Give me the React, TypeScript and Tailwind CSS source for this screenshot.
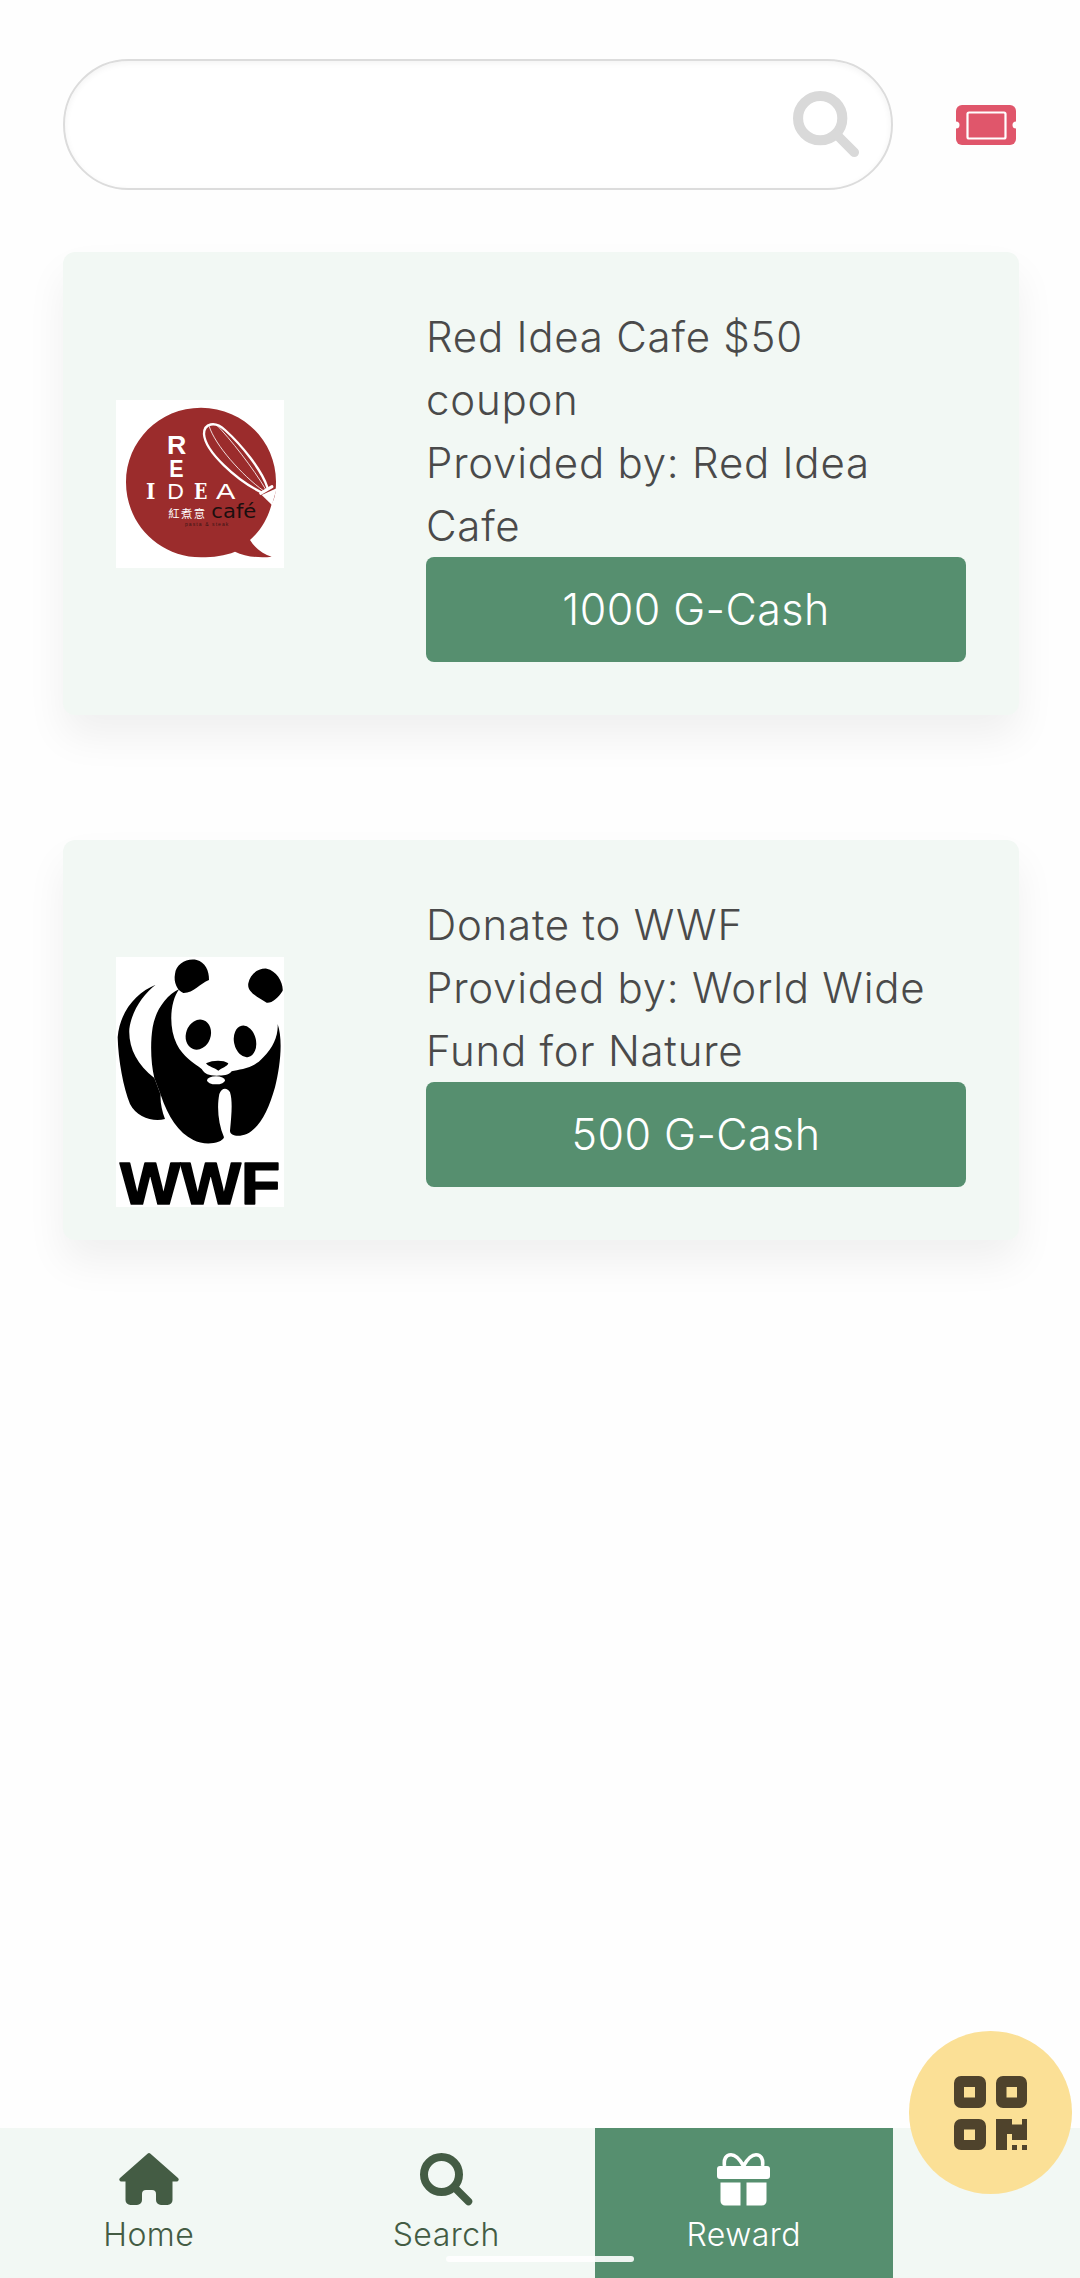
const F = "font-['Inter','Liberation_Sans',sans-serif]";

function SearchIcon({ className }: { className: string }) {
  return (
    <svg viewBox="0 0 53 53" className={className} fill="none" stroke="currentColor">
      <circle cx="21.5" cy="21.5" r="17.5" strokeWidth="8" />
      <path d="M35 35 L48.5 48.5" strokeWidth="7.5" strokeLinecap="round" />
    </svg>
  );
}

function TicketIcon() {
  return (
    <svg viewBox="0 0 60 40" className="w-[60px] h-[40px]">
      <rect x="0" y="0" width="60" height="40" rx="6" fill="#e0566b" />
      <circle cx="0" cy="20" r="3.5" fill="#fff" />
      <circle cx="60" cy="20" r="3.5" fill="#fff" />
      <rect x="11.500" y="7.500" width="38" height="26" rx="1.500" fill="#e0566b" stroke="#fff" strokeWidth="2.200" />
    </svg>
  );
}

function HomeIcon() {
  return (
    <svg viewBox="0 0 60 52" className="w-[60px] h-[52px]" fill="currentColor">
      <path d="M28.500 .8a2.200 2.200 0 0 1 3 0L59 25a2 2 0 0 1-1.400 3.500h-4.100V47a5 5 0 0 1-5 5H42a5 5 0 0 1-5-5v-6a4 4 0 0 0-4-4h-6a4 4 0 0 0-4 4v6a5 5 0 0 1-5 5h-6.500a5 5 0 0 1-5-5V28.500H2.400A2 2 0 0 1 1 25Z" />
    </svg>
  );
}

function GiftIcon() {
  return (
    <svg viewBox="0 0 53 53" className="w-[53px] h-[53px]" fill="#fff">
      <path d="M26.500 13C22 5 18 1.800 14 1.800 9 1.800 6.500 6 7.500 13M26.500 13C31 5 35 1.800 39 1.800 44 1.800 46.500 6 45.500 13" fill="none" stroke="#fff" strokeWidth="3.600" />
      <rect x="0" y="13" width="53" height="13" rx="3" />
      <path d="M3.500 29.500H23.500V52.500H8a4.500 4.500 0 0 1-4.500-4.500ZM29.500 29.500H49.500V48a4.500 4.500 0 0 1-4.500 4.500H29.500Z" />
    </svg>
  );
}

function QrIcon() {
  return (
    <svg viewBox="0 0 73 74" className="w-[73px] h-[74px]" fill="#4f432c">
      <path fillRule="evenodd" d="M7 0H25a7 7 0 0 1 7 7V25a7 7 0 0 1-7 7H7a7 7 0 0 1-7-7V7a7 7 0 0 1 7-7ZM10 11V21.500H21V11Z" />
      <path fillRule="evenodd" d="M49 0H66a7 7 0 0 1 7 7V25a7 7 0 0 1-7 7H49a7 7 0 0 1-7-7V7a7 7 0 0 1 7-7ZM52.500 11V21.500H63V11Z" />
      <path fillRule="evenodd" d="M7 43H25a7 7 0 0 1 7 7V67a7 7 0 0 1-7 7H7a7 7 0 0 1-7-7V50a7 7 0 0 1 7-7ZM10 53.500V64H21V53.500Z" />
      <path d="M42 43H58V48.500H68V43H73V64H58V58H53V74H42Z" />
      <rect x="58" y="69" width="5" height="5" />
      <rect x="68" y="69" width="5" height="5" />
    </svg>
  );
}

function RedIdeaLogo() {
  const serif = "'DejaVu Serif','Liberation Serif',serif";
  const sans = "'Liberation Sans',sans-serif";
  return (
    <svg viewBox="78 60 504 504" className="w-[168px] h-[168px] bg-white block">
      <path d="M333 83C458 83 558 183 558 305C558 345 552 358 545 372C535 410 515 450 480 480C495 505 520 522 545 530C510 535 465 530 435 515C405 527 370 532 333 532C208 532 108 432 108 307C108 183 208 83 333 83Z" fill="#9b2c2c" />
      <path d="M560 325L546 375L515 345Z" fill="#fff" />
      <g fill="none" stroke="#fff" strokeLinecap="round">
        <path d="M512 336C440 300 345 215 342 162C342 130 375 122 405 150C455 195 515 270 532 322" strokeWidth="7" />
        <path d="M520 332C455 285 375 195 358 140" strokeWidth="2.500" />
        <path d="M527 328C490 265 420 175 378 133" strokeWidth="2.500" />
        <path d="M512 340L546 320" strokeWidth="9" />
      </g>
      <g fill="#fff" fontWeight="700" fontFamily={serif}>
        <text x="168" y="358" fontSize="66" textLength="28" lengthAdjust="spacingAndGlyphs">I</text>
        <text x="312" y="357" fontSize="66" textLength="40" lengthAdjust="spacingAndGlyphs">E</text>
      </g>
      <g fill="#fff" fontWeight="700" fontFamily={sans}>
        <text x="231" y="222" fontSize="80" textLength="58" lengthAdjust="spacingAndGlyphs">R</text>
        <text x="238" y="290" fontSize="70" textLength="43" lengthAdjust="spacingAndGlyphs">E</text>
      </g>
      <g fill="#fff" fontFamily={sans}>
        <text x="232" y="358" fontSize="66" textLength="50" lengthAdjust="spacingAndGlyphs">D</text>
        <text x="378" y="358" fontSize="68" textLength="58" lengthAdjust="spacingAndGlyphs">A</text>
      </g>
      <text x="235" y="414" fontSize="34" fill="#fff" textLength="110" fontFamily="'Noto Sans CJK TC',sans-serif">紅煮意</text>
      <text x="364" y="413" fontSize="56" fill="#1a0f0f" textLength="135" lengthAdjust="spacingAndGlyphs" fontFamily="'DejaVu Sans',sans-serif">café</text>
      <text x="285" y="437" fontSize="15" fill="#3a1414" textLength="130" fontFamily={sans}>pasta &amp; steak</text>
    </svg>
  );
}

function WwfLogo() {
  return (
    <svg viewBox="78 50 504 748" className="w-[168px] h-[250px] bg-white block overflow-visible">
      <g fill="#000">
        <path d="M255 100C258 70 290 52 320 58C345 64 358 90 357 118C330 128 310 158 280 157C262 150 250 125 255 100Z" />
        <path d="M475 128C480 100 505 82 530 84C560 90 580 125 578 150C565 172 545 188 530 186C505 170 470 155 475 128Z" />
        <ellipse cx="325" cy="282" rx="37" ry="46" transform="rotate(20 325 282)" />
        <ellipse cx="465" cy="302" rx="33" ry="48" transform="rotate(-12 465 302)" />
        <path d="M348 368C370 358 400 358 415 368C412 378 395 382 385 390C375 382 355 378 348 368Z" />
        <path d="M197 132C140 155 90 210 83 290C85 360 100 440 120 490C140 530 190 545 225 535C215 510 210 480 212 462L193 412C140 370 115 320 118 265C125 210 160 160 197 132Z" />
        <path d="M268 145C240 180 235 260 260 310C280 350 310 365 335 385C345 400 355 405 380 405C400 405 415 405 425 392C450 385 490 385 520 350C550 320 565 285 563 250C580 300 570 380 555 440C535 510 510 560 470 580C445 590 420 585 420 570C425 520 428 480 420 455C412 440 395 440 388 460C380 500 385 550 402 590C395 610 340 615 310 598C265 575 235 530 212 462L193 412C183 370 180 310 188 260C195 215 225 165 268 145Z" />
      </g>
      <ellipse cx="378" cy="419" rx="27" ry="12" fill="#fff" />
      <text x="90" y="790" fontSize="180" fontWeight="700" textLength="480" lengthAdjust="spacingAndGlyphs" fill="#000" stroke="#000" strokeWidth="5" strokeLinejoin="round" fontFamily="'Liberation Sans',sans-serif">WWF</text>
    </svg>
  );
}

function Card({ logo, lines, price, logoClass }: { logo: React.ReactNode; lines: string[]; price: string; logoClass?: string }) {
  return (
    <div className="w-[956px] flex items-center p-[53px] bg-[#f2f8f4] rounded-[12px] shadow-[0_22px_40px_rgba(0,0,0,0.06)]">
      <div className={"w-[310px] shrink-0 " + (logoClass ?? "")}>{logo}</div>
      <div className="flex-1">
        <div className="text-[42px] leading-[63px] tracking-[0.018em] text-[#4a4a4a] font-[350]">
          {lines.map((l) => (
            <div key={l}>{l}</div>
          ))}
        </div>
        <button className="w-full h-[105px] bg-[#568f6f] rounded-[8px] text-white text-[43px] tracking-[0.01em] font-[350] flex items-center justify-center">
          {price}
        </button>
      </div>
    </div>
  );
}

function Tab({ icon, label, active }: { icon: React.ReactNode; label: string; active?: boolean }) {
  return (
    <div className={"w-[297.5px] flex flex-col items-center pt-[25px] " + (active ? "bg-[#568f6f] text-white" : "text-[#445c44]")}>
      <div className="h-[52px] flex items-center justify-center">{icon}</div>
      <div className="text-[32px] leading-[44px] mt-[8px] tracking-[0.015em] font-[350]">{label}</div>
    </div>
  );
}

export default function App() {
  return (
    <div className={"relative w-[1080px] h-[2278px] overflow-hidden bg-[#fefefe] flex flex-col " + F}>
      <div className="flex items-center pt-[59px] pl-[63px]">
        <div className="w-[830px] h-[131px] rounded-full border-2 border-[#dcdcdc] bg-white shadow-[inset_0_2px_6px_rgba(0,0,0,0.05)] flex items-center justify-end pr-[31px] text-[#d9d9d9]">
          <SearchIcon className="w-[67px] h-[67px]" />
        </div>
        <div className="ml-[63px]">
          <TicketIcon />
        </div>
      </div>

      <div className="flex flex-col gap-[125px] pl-[63px] pt-[62px]">
        <Card logo={<RedIdeaLogo />} lines={["Red Idea Cafe $50", "coupon", "Provided by: Red Idea", "Cafe"]} price="1000 G-Cash" />
        <Card logo={<WwfLogo />} lines={["Donate to WWF", "Provided by: World Wide", "Fund for Nature"]} price="500 G-Cash" logoClass="self-end -mb-[20px]" />
      </div>

      <div className="mt-auto h-[150px] bg-[#f2f8f4] flex">
        <Tab icon={<HomeIcon />} label="Home" />
        <Tab icon={<SearchIcon className="w-[53px] h-[53px]" />} label="Search" />
        <Tab icon={<GiftIcon />} label="Reward" active />
      </div>

      <div className="absolute left-[909px] top-[2031px] w-[163px] h-[163px] rounded-full bg-[#fbe096] flex items-center justify-center">
        <QrIcon />
      </div>
      <div className="absolute left-[446px] top-[2256px] w-[188px] h-[6px] rounded-full bg-white/90" />
    </div>
  );
}
